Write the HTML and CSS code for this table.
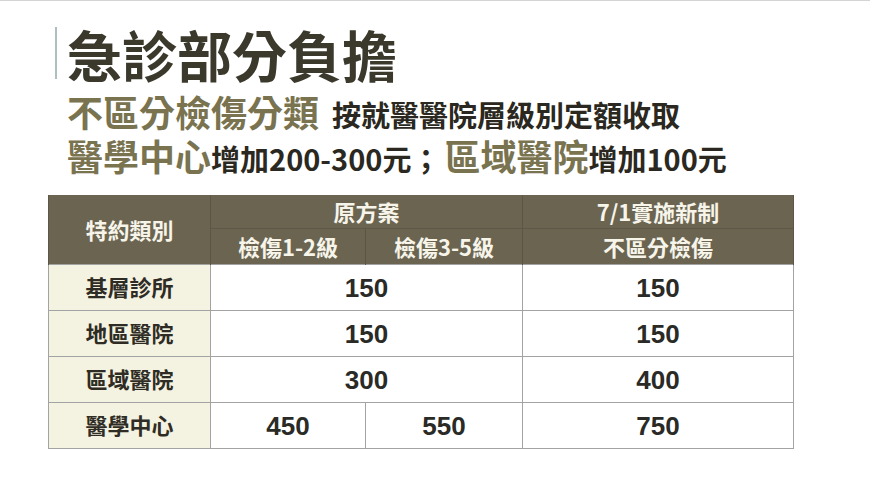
FILE: index.html
```html
<!DOCTYPE html>
<html lang="zh-Hant">
<head>
<meta charset="utf-8">
<link rel="stylesheet" href="styles.css">
</head>
<body>
<div class="slide">
  <div class="title-row"><h1 class="title">急診部分負擔</h1></div>
  <p class="line line-one"><span class="hl">不區分檢傷分類</span><span class="rest">按就醫醫院層級別定額收取</span></p>
  <p class="line line-two"><span class="hl">醫學中心</span>增加200-300元；<span class="hl gap">區域醫院</span>增加100元</p>
  <table class="fees">
    <colgroup>
      <col class="c1"><col class="c2"><col class="c3"><col class="c4">
    </colgroup>
    <thead>
      <tr class="h1row">
        <th rowspan="2" class="corner">特約類別</th>
        <th colspan="2">原方案</th>
        <th>7/1實施新制</th>
      </tr>
      <tr class="h2row">
        <th>檢傷1-2級</th>
        <th>檢傷3-5級</th>
        <th>不區分檢傷</th>
      </tr>
    </thead>
    <tbody>
      <tr><th class="label">基層診所</th><td colspan="2">150</td><td>150</td></tr>
      <tr><th class="label">地區醫院</th><td colspan="2">150</td><td>150</td></tr>
      <tr><th class="label">區域醫院</th><td colspan="2">300</td><td>400</td></tr>
      <tr><th class="label">醫學中心</th><td>450</td><td>550</td><td>750</td></tr>
    </tbody>
  </table>
</div>
</body>
</html>
```
FILE: styles.css
```css
html, body {
  margin: 0;
  padding: 0;
  background: #ffffff;
}
body {
  border-top: 1px solid #d4d4d4;
  font-family: "Noto Sans CJK TC", "Noto Sans", sans-serif;
  color: #2e2c24;
}
.slide {
  width: 870px;
  height: 487px;
  box-sizing: border-box;
  padding-top: 26px;
}
.title-row {
  margin-left: 55px;
  border-left: 2px solid #aebfc2;
  padding-left: 10px;
  height: 52px;
  display: flex;
  align-items: center;
}
.title {
  margin: 0;
  font-size: 55px;
  line-height: 52px;
  font-weight: 700;
  color: #3b382c;
}
.line {
  margin: 0 0 0 67px;
  font-weight: 700;
  color: #2a2820;
  font-size: 29px;
  white-space: nowrap;
}
.line-one {
  margin-top: 12px;
  height: 44px;
  line-height: 44px;
}
.line-two {
  height: 46px;
  line-height: 46px;
}
.hl {
  color: #7a7350;
  font-size: 36px;
  line-height: 40px;
}
.rest {
  margin-left: 13px;
}
.gap {
  margin-left: 4px;
}
.fees {
  margin: 14px 0 0 48px;
  border-collapse: collapse;
  table-layout: fixed;
  width: 745px;
}
.c1 { width: 162px; }
.c2 { width: 155px; }
.c3 { width: 157px; }
.c4 { width: 271px; }
.fees th, .fees td {
  padding: 0;
  text-align: center;
  vertical-align: middle;
  font-weight: 700;
}
.fees thead th {
  background: #6a6450;
  color: #f7f4ea;
  font-size: 22px;
  border-left: 1px solid #5d5646;
  border-right: 1px solid #5d5646;
}
.h1row th { height: 33px; line-height: 33px; }
.h2row th { height: 35px; line-height: 35px; border-top: 1px solid #5f5848; }
.fees tbody th, .fees tbody td {
  border: 1px solid #a3a3a3;
  height: 42px;
}
.fees tbody th.label {
  background: #f4f2e1;
  color: #2e2c24;
  font-size: 22px;
  line-height: 24px;
  padding-bottom: 3px;
}
.fees td {
  background: #ffffff;
  font-family: "Liberation Sans", Arial, sans-serif;
  font-size: 26px;
  line-height: 30px;
  color: #2a2a26;
}
```
